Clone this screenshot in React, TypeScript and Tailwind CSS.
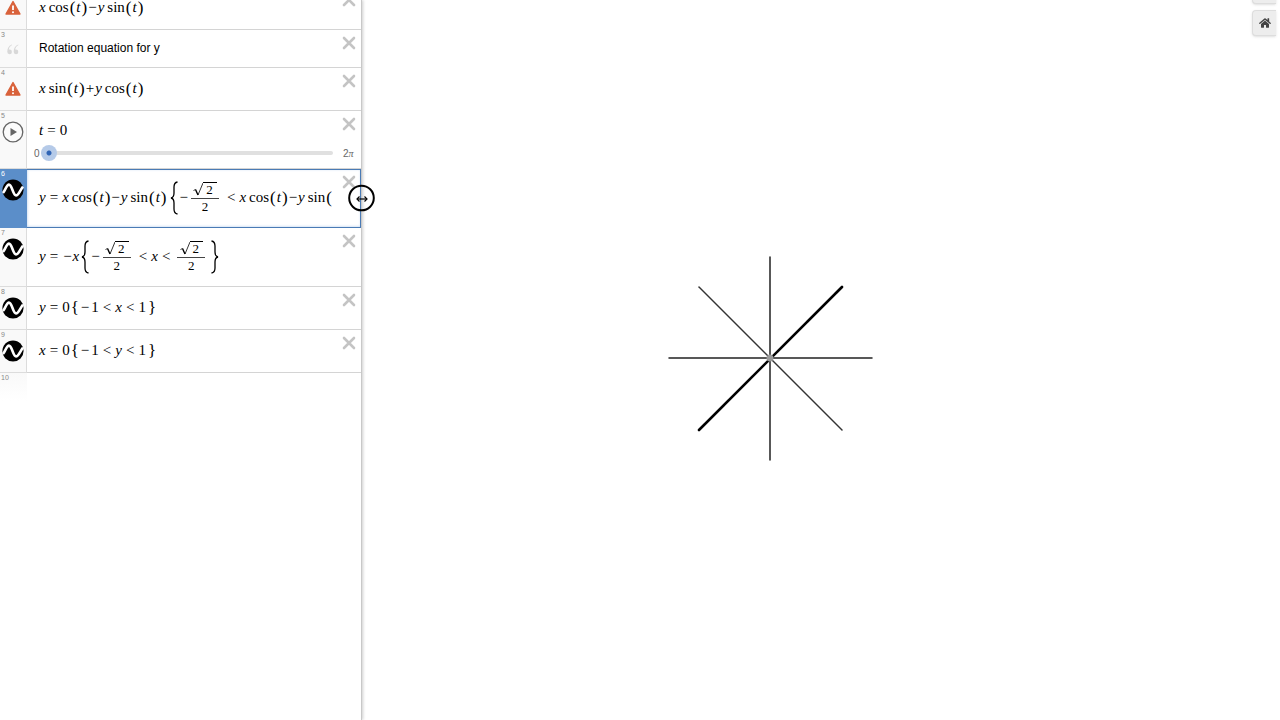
import React, { useState } from 'react';
import { FaHome } from 'react-icons/fa';

/* ---------- math pieces ---------- */

const V = ({ children }: { children: React.ReactNode }) => <i>{children}</i>;

const Op = ({ children }: { children: React.ReactNode }) => <span className="px-1">{children}</span>;

const Fn = ({ name }: { name: string }) => (
  <span className="flex items-center">
    <span className="pl-[3px]">{name}</span>
    <span className="pl-px text-[17px]">(</span>
    <i className="px-px">t</i>
    <span className="pr-px text-[17px]">)</span>
  </span>
);

const Root2Over2 = () => (
  <span className="mr-1 ml-[3px] flex flex-col items-center text-[13px] leading-[14px]">
    <span className="flex w-7 items-end justify-center border-b border-[#444] pb-px">
      <svg width="10" height="14" viewBox="0 0 10 14" fill="none" stroke="#000" aria-label="square root">
        <path d="M0.5 7.5 L2.5 6.5" strokeWidth="0.8" />
        <path d="M2.5 6.5 L5 12" strokeWidth="1.4" />
        <path d="M5 12 L10 0" strokeWidth="0.8" />
      </svg>
      <span className="border-t border-black pr-1 pl-[3px]">2</span>
    </span>
    <span className="pt-px">2</span>
  </span>
);

const TallBrace = ({ side }: { side: 'left' | 'right' }) => (
  <svg width="8" height="34" viewBox="0 0 8 34" fill="none" stroke="#000" strokeWidth="1.3" className="mx-[2px] shrink-0" aria-label={`${side} brace`}>
    {side === 'left'
      ? <path d="M7.5 1 C4.5 1.5 4 3 4 6 V12 C4 15 3.5 16.5 1 17 C3.5 17.5 4 19 4 22 V28 C4 31 4.5 32.5 7.5 33" />
      : <path d="M0.5 1 C3.5 1.5 4 3 4 6 V12 C4 15 4.5 16.5 7 17 C4.5 17.5 4 19 4 22 V28 C4 31 3.5 32.5 0.5 33" />}
  </svg>
);

const Rotated = () => (
  <>
    <V>x</V><Fn name="cos" /><span>−</span><span className="pl-px"><V>y</V></span><Fn name="sin" />
  </>
);

const UnitRange = ({ name }: { name: string }) => (
  <>
    <span className="px-px text-[17px]">{'{'}</span>
    <span className="px-px">−</span><span className="pl-px">1</span><Op>&lt;</Op><V>{name}</V><Op>&lt;</Op>1
    <span className="pl-[2px] text-[17px]">{'}'}</span>
  </>
);

/* ---------- gutter icons ---------- */

const Warning = () => (
  <svg width="16" height="16" viewBox="0 0 16 16" className="my-[3px]" aria-label="Warning">
    <path d="M8 1.5 L15 14 H1 Z" fill="#d9623b" stroke="#d9623b" strokeWidth="1.4" strokeLinejoin="round" />
    <path d="M8 5.5 V10" stroke="#fff" strokeWidth="1.8" />
    <circle cx="8" cy="12.2" r="1" fill="#fff" />
  </svg>
);

const Quote = () => (
  <svg width="12" height="12" viewBox="0 0 12 12" fill="#d8d8d8" className="my-1">
    <path d="M4.8 0.5 C1.5 1.8 0.3 4.5 0.3 7.8 A2.3 2.3 0 1 0 2.6 5.6 C2.3 5.6 2 5.6 1.8 5.7 C2 3.8 3 2.2 5.1 1.1 Z" />
    <path d="M11.2 0.5 C7.9 1.8 6.7 4.5 6.7 7.8 A2.3 2.3 0 1 0 9 5.6 C8.7 5.6 8.4 5.6 8.2 5.7 C8.4 3.8 9.4 2.2 11.5 1.1 Z" />
  </svg>
);

const Play = () => (
  <button aria-label="Play" className="block">
    <svg width="22" height="22" viewBox="0 0 22 22">
      <circle cx="11" cy="11" r="9.8" fill="#fbfbfb" stroke="#666" strokeWidth="1.3" />
      <path d="M8.5 7 L15 11 L8.5 15 Z" fill="#666" />
    </svg>
  </button>
);

const Wave = () => (
  <button aria-label="Hide curve" className="block">
    <svg width="22" height="22" viewBox="0 0 22 22">
      <circle cx="11" cy="11" r="10.6" fill="#000" />
      <path d="M1 14 C3.2 11.5 4.6 5.6 7 5.6 C10 5.6 11 16.4 14 16.4 C16.8 16.4 18 11 21 7.6" fill="none" stroke="#fff" strokeWidth="2.6" />
    </svg>
  </button>
);

const CloseButton = () => (
  <button aria-label="Delete" className="w-7 shrink-0 self-start pt-[6px] pl-[9px]">
    <svg width="14" height="14" viewBox="0 0 14 14" stroke="#c4c4c4" strokeWidth="2.6" strokeLinecap="round">
      <path d="M2 2 L12 12 M12 2 L2 12" />
    </svg>
  </button>
);

type Row = {
  n: number;
  icon: React.ReactNode;
  body: React.ReactNode;
  size: string;
  note?: boolean;
  slider?: boolean;
};

const ROWS: Row[] = [
  { n: 2, icon: <Warning />, size: 'min-h-[43px]', body: <Rotated /> },
  { n: 3, icon: <Quote />, size: 'min-h-[38px]', note: true, body: 'Rotation equation for y' },
  { n: 4, icon: <Warning />, size: 'min-h-[43px]', body: <><V>x</V><Fn name="sin" /><span>+</span><span className="pl-px"><V>y</V></span><Fn name="cos" /></> },
  { n: 5, icon: <Play />, size: 'min-h-[58px]', slider: true, body: <><V>t</V><Op>=</Op>0</> },
  {
    n: 6, icon: <Wave />, size: 'min-h-[59px]',
    body: (
      <>
        <V>y</V><Op>=</Op><Rotated />
        <TallBrace side="left" />
        <span>−</span><Root2Over2 /><Op>&lt;</Op><Rotated />
      </>
    ),
  },
  {
    n: 7, icon: <Wave />, size: 'min-h-[59px]',
    body: (
      <>
        <V>y</V><Op>=</Op><span className="px-px">−</span><V>x</V>
        <TallBrace side="left" />
        <span>−</span><Root2Over2 /><Op>&lt;</Op><V>x</V><Op>&lt;</Op><Root2Over2 />
        <TallBrace side="right" />
      </>
    ),
  },
  { n: 8, icon: <Wave />, size: 'min-h-[43px]', body: <><V>y</V><Op>=</Op>0<UnitRange name="x" /></> },
  { n: 9, icon: <Wave />, size: 'min-h-[43px]', body: <><V>x</V><Op>=</Op>0<UnitRange name="y" /></> },
];

const Slider = () => {
  const [t, setT] = useState(0);
  return (
    <div className="flex h-3 items-center pl-[7px] text-[10px] text-[#666]">
      <label htmlFor="slider-t" className="w-[7px]">0</label>
      <input
        id="slider-t"
        type="range"
        min={0}
        max={6.283}
        step={0.001}
        value={t}
        onChange={(e) => setT(Number(e.target.value))}
        className="h-4 min-w-0 flex-1 appearance-none bg-transparent [&::-webkit-slider-runnable-track]:h-1 [&::-webkit-slider-runnable-track]:rounded-full [&::-webkit-slider-runnable-track]:bg-[#e0e0e0] [&::-webkit-slider-thumb]:-mt-[6px] [&::-webkit-slider-thumb]:h-4 [&::-webkit-slider-thumb]:w-4 [&::-webkit-slider-thumb]:appearance-none [&::-webkit-slider-thumb]:rounded-full [&::-webkit-slider-thumb]:bg-[radial-gradient(circle,#2f64b5_2px,#b5cae8_3px)]"
      />
      <span className="w-7 pl-[10px]">2<i className="font-['Liberation_Serif',serif]">π</i></span>
    </div>
  );
};

const ExpressionRow = ({ row, selected, onSelect }: { row: Row; selected: boolean; onSelect: () => void }) => (
  <li onClick={onSelect} className={`flex ${row.size}`}>
    <div
      className={`w-[27px] shrink-0 border-r border-b ${
        selected ? 'border-[#5b8ec9] bg-[#5b8ec9] text-white' : 'border-[#dcdcdc] bg-[#f9f9f9] text-[#888]'
      }`}
    >
      <div className="h-[10px] pl-px text-[7px] leading-[10px]">{row.n}</div>
      <div className="flex justify-center pr-px">{row.icon}</div>
    </div>
    <div
      className={`flex min-w-0 flex-1 flex-col border-b ${
        selected ? 'border-[#4a7bb5] shadow-[inset_0_1px_0_#4a7bb5,inset_-1px_0_0_#4a7bb5,inset_0_0_3px_#a9c6e8]' : 'border-[#d4d4d4]'
      }`}
    >
      <div className={row.slider ? 'flex h-9' : 'flex flex-1'}>
        <div
          className={`flex min-w-0 flex-1 items-center overflow-hidden pl-3 whitespace-nowrap text-black ${
            row.note ? 'pb-px text-[12px]' : "pb-px font-['Liberation_Serif',serif] text-[15px]"
          } ${row.slider ? 'pt-1' : ''}`}
        >
          {row.body}
        </div>
        <CloseButton />
      </div>
      {row.slider && <Slider />}
    </div>
  </li>
);

const Graph = () => (
  <svg className="h-full w-full" aria-label="Graph" stroke="#333" strokeWidth="1.5" strokeLinecap="round">
    <path d="M307 358 H510 M408 257 V460" stroke="#222" />
    <path d="M337 287 L480 430" />
    <path d="M337 430 L480 287" stroke="#000" strokeWidth="2.6" />
    <circle cx="408" cy="358" r="3.5" fill="#999" stroke="none" />
  </svg>
);

export default function App() {
  const [selected, setSelected] = useState(6);

  return (
    <div className="relative flex h-screen overflow-hidden bg-white font-['Liberation_Sans',sans-serif]">
      <aside className="w-[362px] shrink-0 overflow-hidden border-r border-[#c8c8c8] shadow-[1px_0_3px_rgba(0,0,0,0.2)]">
        {/* list is scrolled a little past the second expression's top */}
        <ul className="-mt-[13px]">
          {ROWS.map((row) => (
            <ExpressionRow key={row.n} row={row} selected={row.n === selected} onSelect={() => setSelected(row.n)} />
          ))}
          <li className="flex">
            <div className="h-7 w-[27px] bg-linear-to-b from-[#f9f9f9] to-white pl-px text-[7px] leading-[10px] text-[#888]">10</div>
          </li>
        </ul>
      </aside>

      <main className="min-w-0 flex-1">
        <Graph />
      </main>

      {/* graph tools */}
      <div className="absolute -top-[22px] right-1 flex flex-col gap-[6px]">
        <button aria-label="Zoom out" className="h-[26px] w-6 rounded-l border border-r-0 border-[#ddd] bg-[#ededed] shadow-sm" />
        <button aria-label="Default view" className="flex h-[26px] w-6 items-center justify-center rounded-l border border-r-0 border-[#ddd] bg-[#ededed] text-[#444] shadow-sm">
          <FaHome size={12} />
        </button>
      </div>

      {/* resize cursor */}
      <svg className="absolute top-[184px] left-[347px]" width="28" height="28" viewBox="0 0 28 28" fill="none" stroke="#000">
        <circle cx="14.5" cy="14" r="12.3" strokeWidth="2" />
        <path d="M10 15 H20" strokeWidth="1.2" />
        <path d="M12.5 12.5 L10 15 L12.5 17.5 M17.5 12.5 L20 15 L17.5 17.5" strokeWidth="1.2" />
      </svg>
    </div>
  );
}
